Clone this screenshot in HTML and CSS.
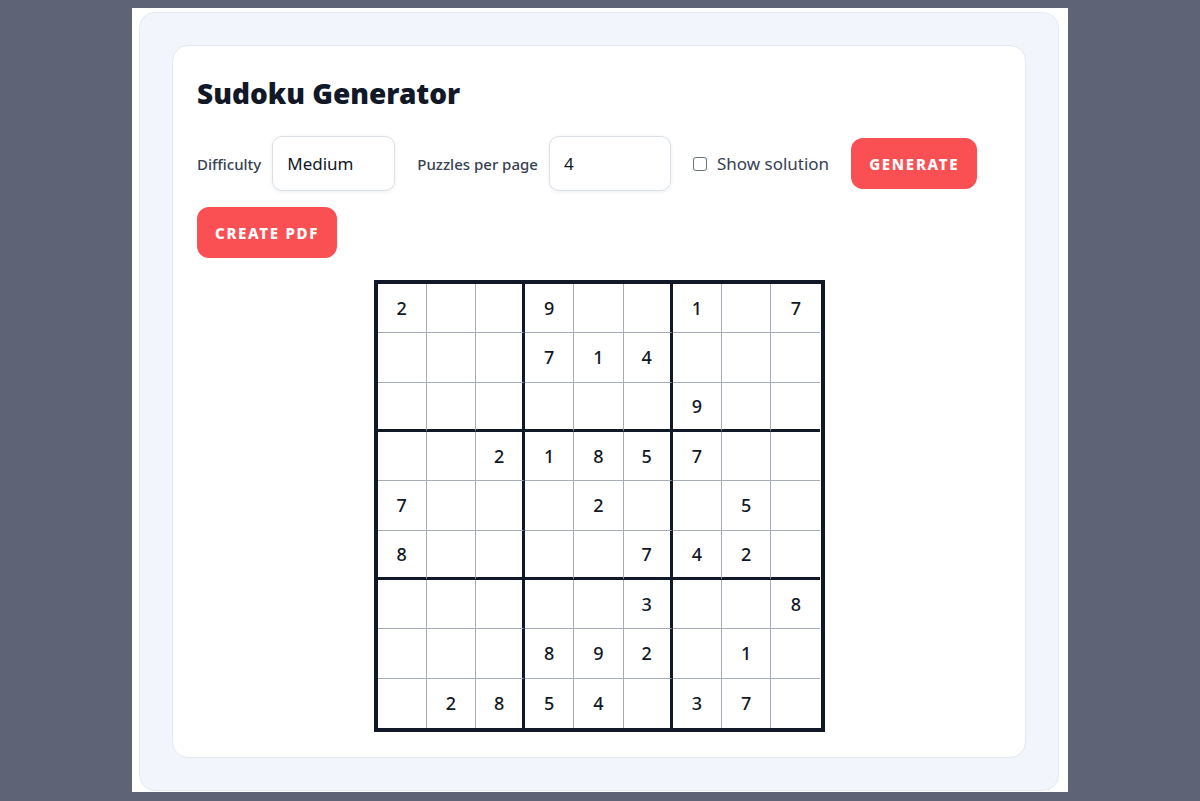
FILE: index.html
```html
<!DOCTYPE html>
<html lang="en">
<head>
<meta charset="utf-8">
<title>Sudoku Generator</title>
<link rel="stylesheet" href="styles.css">
</head>
<body>
<div class="frame">
  <div class="panel">
    <div class="card">
      <h1 class="title">Sudoku Generator</h1>
      <div class="controls">
        <label class="field">
          <span class="field-label">Difficulty</span>
          <select class="control select">
            <option>Medium</option>
          </select>
        </label>
        <label class="field">
          <span class="field-label">Puzzles per page</span>
          <input class="control input" type="text" value="4">
        </label>
        <label class="check">
          <input class="checkbox" type="checkbox">
          <span>Show solution</span>
        </label>
        <button class="btn">Generate</button>
        <button class="btn">Create PDF</button>
      </div>
      <div class="board" id="board"></div>
    </div>
  </div>
</div>
<script>
  var rows = [
    "2..9..1.7",
    "...714...",
    "......9..",
    "..21857..",
    "7...2..5.",
    "8....742.",
    ".....3..8",
    "...892.1.",
    ".2854.37."
  ];
  var board = document.getElementById("board");
  for (var r = 0; r < 9; r++) {
    for (var c = 0; c < 9; c++) {
      var cell = document.createElement("div");
      var cls = "cell";
      if (c === 2 || c === 5) cls += " box-r";
      if (c === 8) cls += " last-c";
      if (r === 2 || r === 5) cls += " box-b";
      if (r === 8) cls += " last-r";
      cell.className = cls;
      var ch = rows[r][c];
      cell.textContent = ch === "." ? "" : ch;
      board.appendChild(cell);
    }
  }
</script>
</body>
</html>
```

FILE: styles.css
```css
html, body {
  margin: 0;
  padding: 0;
}

body {
  background: #5e6375;
  font-family: "Noto Sans", "Open Sans", sans-serif;
  color: #111827;
}

.frame {
  width: 936px;
  height: 784px;
  margin: 8px auto 0;
  background: #ffffff;
  box-sizing: border-box;
  padding: 4px 9px 4px 7px;
}

.panel {
  background: #f2f6fc;
  border: 1px solid #e6ebf2;
  border-radius: 16px;
  padding: 32px;
}

.card {
  background: #ffffff;
  border: 1px solid #e4e8ef;
  border-radius: 16px;
  padding: 24px 24px 25px;
}

.title {
  margin: 6px 0 0;
  font-size: 28px;
  line-height: 34px;
  font-weight: 900;
  color: #111827;
}

.controls {
  margin-top: 26px;
  display: flex;
  flex-wrap: wrap;
  align-items: center;
  gap: 16px 22px;
}

.field {
  display: flex;
  align-items: center;
  gap: 11px;
}

.field-label {
  font-size: 15px;
  color: #374151;
  font-weight: 500;
}

.control {
  box-sizing: border-box;
  height: 55px;
  width: 123px;
  border: 1px solid #dbe0e8;
  border-radius: 10px;
  background: #ffffff;
  box-shadow: 0 1px 4px rgba(15, 23, 42, 0.07);
  padding: 0 14px;
  font-family: "Noto Sans", "Open Sans", sans-serif;
  font-size: 17px;
  color: #111827;
  outline: none;
}

.select {
  appearance: none;
  -webkit-appearance: none;
}

.input {
  width: 122px;
}

.check {
  display: flex;
  align-items: center;
  gap: 10px;
  font-size: 17px;
  color: #374151;
}

.checkbox {
  appearance: none;
  -webkit-appearance: none;
  margin: 0;
  width: 14px;
  height: 14px;
  border: 1.5px solid #6b7280;
  border-radius: 3px;
  background: #ffffff;
  box-sizing: border-box;
}

.btn {
  height: 51px;
  padding: 0 18px;
  border: none;
  border-radius: 12px;
  background: #fa5053;
  color: #ffffff;
  font-family: "Noto Sans", "Open Sans", sans-serif;
  font-size: 15px;
  font-weight: 800;
  letter-spacing: 1.7px;
  text-transform: uppercase;
}

.board {
  margin: 22px auto 0;
  width: 451px;
  height: 452px;
  box-sizing: border-box;
  border: 4px solid #111827;
  display: grid;
  grid-template-columns: repeat(9, 1fr);
  grid-template-rows: repeat(9, 1fr);
}

.cell {
  border-right: 1px solid #a6adb8;
  border-bottom: 1px solid #a6adb8;
  display: flex;
  align-items: center;
  justify-content: center;
  font-size: 18px;
  font-weight: 500;
  color: #111827;
}

.cell.box-r {
  border-right: 3px solid #111827;
}

.cell.box-b {
  border-bottom: 3px solid #111827;
}

.cell.last-c {
  border-right: none;
}

.cell.last-r {
  border-bottom: none;
}
```
